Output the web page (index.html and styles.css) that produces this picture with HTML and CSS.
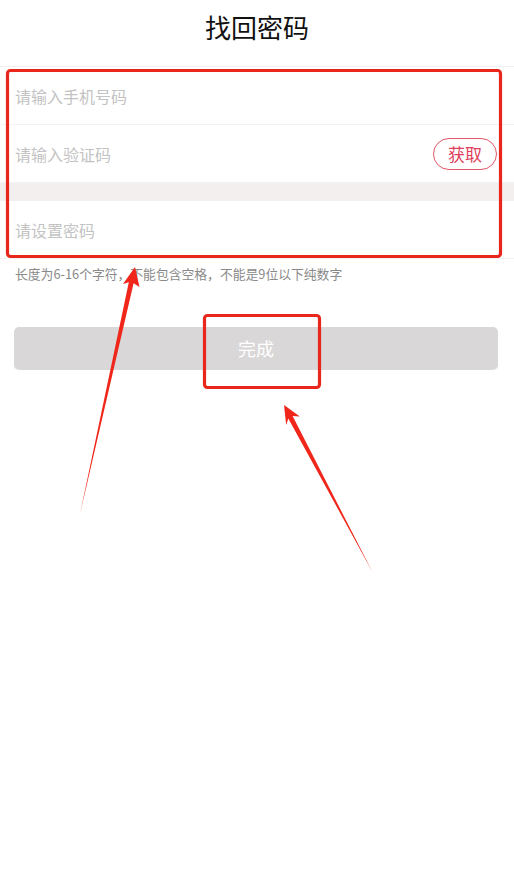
FILE: index.html
```html
<!DOCTYPE html>
<html lang="zh-CN">
<head>
<meta charset="utf-8">
<title>找回密码</title>
<link rel="stylesheet" href="styles.css">
</head>
<body>
<div class="page">
  <header class="topbar"><h1 class="title">找回密码</h1></header>
  <form class="form">
    <div class="row"><input class="field" type="tel" placeholder="请输入手机号码"></div>
    <div class="row">
      <input class="field" type="text" placeholder="请输入验证码">
      <button type="button" class="get-code">获取</button>
    </div>
    <div class="band"></div>
    <div class="row"><input class="field" type="password" placeholder="请设置密码"></div>
  </form>
  <p class="hint">长度为6-16个字符，不能包含空格，不能是9位以下纯数字</p>
  <button type="button" class="submit">完成</button>

  <svg class="annot" width="514" height="885" viewBox="0 0 514 885" aria-hidden="true">
    <rect x="7.5" y="70.5" width="493" height="186" rx="3" ry="3" fill="none" stroke="#e8261c" stroke-width="3.2"/>
    <rect x="204.5" y="315.5" width="115" height="72" rx="3" ry="3" fill="none" stroke="#e8261c" stroke-width="3.2"/>
    <polygon fill="#f0261a" points="135,267 139.5,287 133.6,283.2 80,514 128.8,282.2 123,284"/>
    <polygon fill="#f0261a" points="284,405 299.8,416.4 292.6,416 373,573 288.3,418.4 286.2,425"/>
  </svg>
</div>
</body>
</html>
```
FILE: styles.css
```css
* { box-sizing: border-box; }
html, body { margin: 0; padding: 0; background: #ffffff; }
body {
  font-family: "Noto Sans CJK SC", "Noto Sans", "Liberation Sans", sans-serif;
  color: #111;
}
.page {
  position: relative;
  width: 514px;
  min-height: 885px;
  background: #fff;
}
.topbar {
  height: 67px;
  padding-top: 8px;
  border-bottom: 1px solid #f0f0f0;
}
.title {
  margin: 0;
  font-size: 26px;
  font-weight: 400;
  line-height: 38px;
  text-align: center;
  color: #111;
}
.form {
  display: flex;
  flex-direction: column;
  margin: 0;
}
.row {
  display: flex;
  align-items: center;
  height: 58px;
  padding: 0 17px 0 15px;
  border-bottom: 1px solid #f2f2f2;
}
.band {
  height: 18px;
  background: #f4efef;
}
.field {
  flex: 1;
  min-width: 0;
  border: 0;
  outline: none;
  padding: 0;
  margin: 0;
  background: transparent;
  font-family: inherit;
  font-size: 16px;
  line-height: 22px;
  color: #333;
}
.field::placeholder { color: #c3c3c3; }
.get-code {
  width: 64px;
  height: 32px;
  padding: 0;
  border: 1.5px solid #e2566a;
  border-radius: 16px;
  background: #fff;
  font-family: inherit;
  font-size: 17px;
  line-height: 28px;
  color: #e0405a;
}
.hint {
  margin: 6px 0 0;
  padding-left: 15px;
  font-size: 12.8px;
  line-height: 18px;
  color: #8a8a8a;
}
.submit {
  display: block;
  width: 484px;
  height: 43px;
  margin: 44px 0 0 14px;
  padding: 0;
  border: 0;
  border-radius: 5px;
  background: #d9d7d7;
  font-family: inherit;
  font-size: 18px;
  line-height: 43px;
  color: #fff;
}
.annot {
  position: absolute;
  left: 0;
  top: 0;
  pointer-events: none;
}
```
